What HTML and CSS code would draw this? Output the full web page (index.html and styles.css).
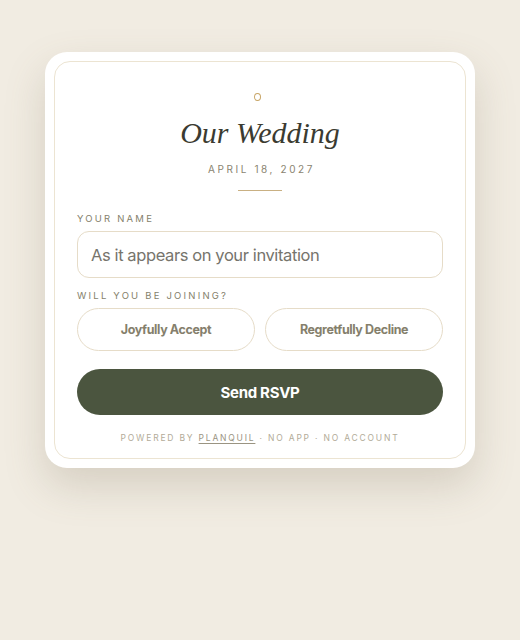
FILE: index.html
```html
<!DOCTYPE html>
<html lang="en">
  <head>
    <meta charset="UTF-8" />
    <meta name="viewport" content="width=device-width, initial-scale=1.0" />
    <title>Our Wedding - RSVP</title>
    <link rel="stylesheet" href="styles.css">
  </head>
  <body>
    <div class="card">
      <div class="card-inner">
        <div class="ring"></div>
        <h1 class="title">Our Wedding</h1>
        <p class="date">April 18, 2027</p>
        <div class="rule"></div>

        <label class="label" for="name">Your name</label>
        <input id="name" class="name-input" type="text" placeholder="As it appears on your invitation" />

        <p class="label">Will you be joining?</p>
        <div class="choices">
          <button class="choice">Joyfully Accept</button>
          <button class="choice">Regretfully Decline</button>
        </div>

        <button class="send">Send RSVP</button>

        <p class="footer">
          Powered by <a href="#">Planquil</a> · No app · No account
        </p>
      </div>
    </div>
  </body>
</html>
```

FILE: styles.css
```css
body {
  margin: 0;
  min-height: 640px;
  background: #f1ece2;
  font-family: Inter, "Open Sans", sans-serif;
  display: flex;
  justify-content: center;
  align-items: flex-start;
  padding-top: 52px;
  box-sizing: border-box;
}

.card {
  width: 430px;
  box-sizing: border-box;
  background: #fff;
  border-radius: 22px;
  padding: 9px;
  box-shadow: 0 18px 40px rgba(120, 105, 80, 0.22);
}

.card-inner {
  border: 1px solid #ece4d2;
  border-radius: 16px;
  padding: 31px 22px 15px;
  display: flex;
  flex-direction: column;
  align-items: stretch;
}

.ring {
  width: 5px;
  height: 6px;
  border: 1.5px solid #c8a566;
  border-radius: 50%;
  align-self: center;
  margin-left: -6px;
}

.title {
  margin: 13px 0 0;
  text-align: center;
  font-family: "Liberation Serif", serif;
  font-style: italic;
  font-weight: normal;
  font-size: 30px;
  line-height: 38px;
  color: #3b3b31;
}

.date {
  margin: 11px 0 0;
  text-align: center;
  font-size: 10px;
  letter-spacing: 2.6px;
  text-transform: uppercase;
  color: #8a8470;
  padding-left: 3px;
}

.rule {
  width: 44px;
  height: 1px;
  background: #c9b083;
  align-self: center;
  margin-top: 15px;
}

.label {
  display: block;
  margin: 22px 0 7px;
  font-size: 9.5px;
  letter-spacing: 2.2px;
  text-transform: uppercase;
  color: #857f6c;
}

.name-input {
  height: 47px;
  box-sizing: border-box;
  border: 1px solid #e6dcc8;
  border-radius: 12px;
  padding: 0 13px;
  font-family: inherit;
  font-size: 16.5px;
  letter-spacing: -0.4px;
  color: #333;
  outline: none;
}

.name-input::placeholder {
  color: #76746c;
}

.name-input + .label {
  margin-top: 12px;
}

.choices {
  display: grid;
  grid-template-columns: 1fr 1fr;
  gap: 10px;
}

.choice {
  height: 43px;
  border: 1px solid #e6dcc8;
  border-radius: 22px;
  background: #fff;
  font-family: inherit;
  font-size: 12.5px;
  font-weight: 700;
  letter-spacing: -0.4px;
  color: #857f6c;
  cursor: pointer;
}

.send {
  margin-top: 18px;
  height: 46px;
  border: none;
  border-radius: 23px;
  background: #4b553f;
  color: #fff;
  font-family: inherit;
  font-size: 15px;
  font-weight: 700;
  letter-spacing: -0.3px;
  cursor: pointer;
}

.footer {
  margin: 18px 0 0;
  text-align: center;
  font-size: 8.5px;
  letter-spacing: 1.8px;
  text-transform: uppercase;
  color: #b2ab98;
}

.footer a {
  color: #9a9482;
  text-decoration: underline;
  text-underline-offset: 2px;
}
```
